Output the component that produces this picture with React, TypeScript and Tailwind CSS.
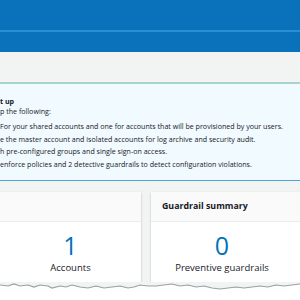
import React from "react";

const lines = [
  "For your shared accounts and one for accounts that will be provisioned by your users.",
  "e the master account and isolated accounts for log archive and security audit.",
  "h pre-configured groups and single sign-on access.",
  "enforce policies and 2 detective guardrails to detect configuration violations.",
];

export default function App() {
  return (
    <div
      className="w-[300px] h-[300px] overflow-hidden bg-[#f2f3f3] flex flex-col text-[#16191f]"
      style={{ fontFamily: '"Open Sans", "Noto Sans", sans-serif' }}
    >
      <div className="h-[52px] bg-[#0a72ba] flex flex-col shrink-0">
        <div className="h-[30px]" />
        <div className="h-[2px] bg-[#2a8fd2]" />
      </div>
      <div className="h-[30px] bg-[#f2f3f3] shrink-0" />
      <div className="h-[99px] shrink-0 bg-[#f1faff] border-t-2 border-[#a9d3cd] border-b border-b-[#4aa6d6] pt-[12px] pl-0">
        <div className="text-[7.1px] leading-[10px] font-bold">t up</div>
        <div className="text-[7.1px] leading-[10px]">p the following:</div>
        <div className="mt-[4px] flex flex-col">
          {lines.map((l) => (
            <div key={l} className="text-[7.1px] leading-[12.6px] whitespace-nowrap">
              {l}
            </div>
          ))}
        </div>
      </div>
      <div className="h-[11px] shrink-0" />
      <div className="flex gap-[10px] h-[90px] shrink-0">
        <div className="w-[141px] shrink-0 bg-white shadow-[0_1px_2px_rgba(0,0,0,0.25)] flex flex-col">
          <div className="h-[30px] bg-[#fafafa] border-b border-[#eaeded]" />
          <div className="flex-1 flex flex-col items-center pt-[8px]">
            <div className="text-[25px] leading-[30px] text-[#0073bb]">1</div>
            <div className="text-[9.5px] leading-[14px] mt-[1px]">Accounts</div>
          </div>
        </div>
        <div className="w-[160px] shrink-0 bg-white shadow-[0_1px_2px_rgba(0,0,0,0.25)] flex flex-col">
          <div className="h-[30px] bg-[#fafafa] border-b border-[#eaeded] flex items-center pl-[11px] text-[8.8px] font-bold">
            Guardrail summary
          </div>
          <div className="flex-1 flex flex-col items-center pt-[8px] w-[142px]">
            <div className="text-[25px] leading-[30px] text-[#0073bb]">0</div>
            <div className="text-[9.5px] leading-[14px] mt-[1px]">Preventive guardrails</div>
          </div>
        </div>
      </div>
      <div className="flex-1 bg-white relative">
        <svg width="300" height="18" viewBox="0 0 300 18" className="block">
          <rect x="0" y="0" width="300" height="18" fill="#ffffff" />
          <path
            d="M0 3 L8 4 L14 2 L20 4 L28 3 L34 5 L40 3 L48 4 L52 6 L60 4 L66 5 L72 3 L80 5 L88 6 L96 4 L104 6 L112 5 L120 4 L128 6 L134 5 L140 3 L148 4 L156 4 L164 3 L172 2 L180 4 L188 3 L196 5 L204 4 L212 6 L220 7 L228 6 L236 5 L244 6 L252 5 L260 4 L268 5 L276 3 L284 4 L292 3 L300 2 L300 0 L0 0 Z"
            fill="#f2f3f3"
          />
          <path
            d="M0 3 L8 4 L14 2 L20 4 L28 3 L34 5 L40 3 L48 4 L52 6 L60 4 L66 5 L72 3 L80 5 L88 6 L96 4 L104 6 L112 5 L120 4 L128 6 L134 5 L140 3 L148 4 L156 4 L164 3 L172 2 L180 4 L188 3 L196 5 L204 4 L212 6 L220 7 L228 6 L236 5 L244 6 L252 5 L260 4 L268 5 L276 3 L284 4 L292 3 L300 2"
            fill="none"
            stroke="#9aa0a6"
            strokeWidth="1.2"
          />
        </svg>
      </div>
    </div>
  );
}
